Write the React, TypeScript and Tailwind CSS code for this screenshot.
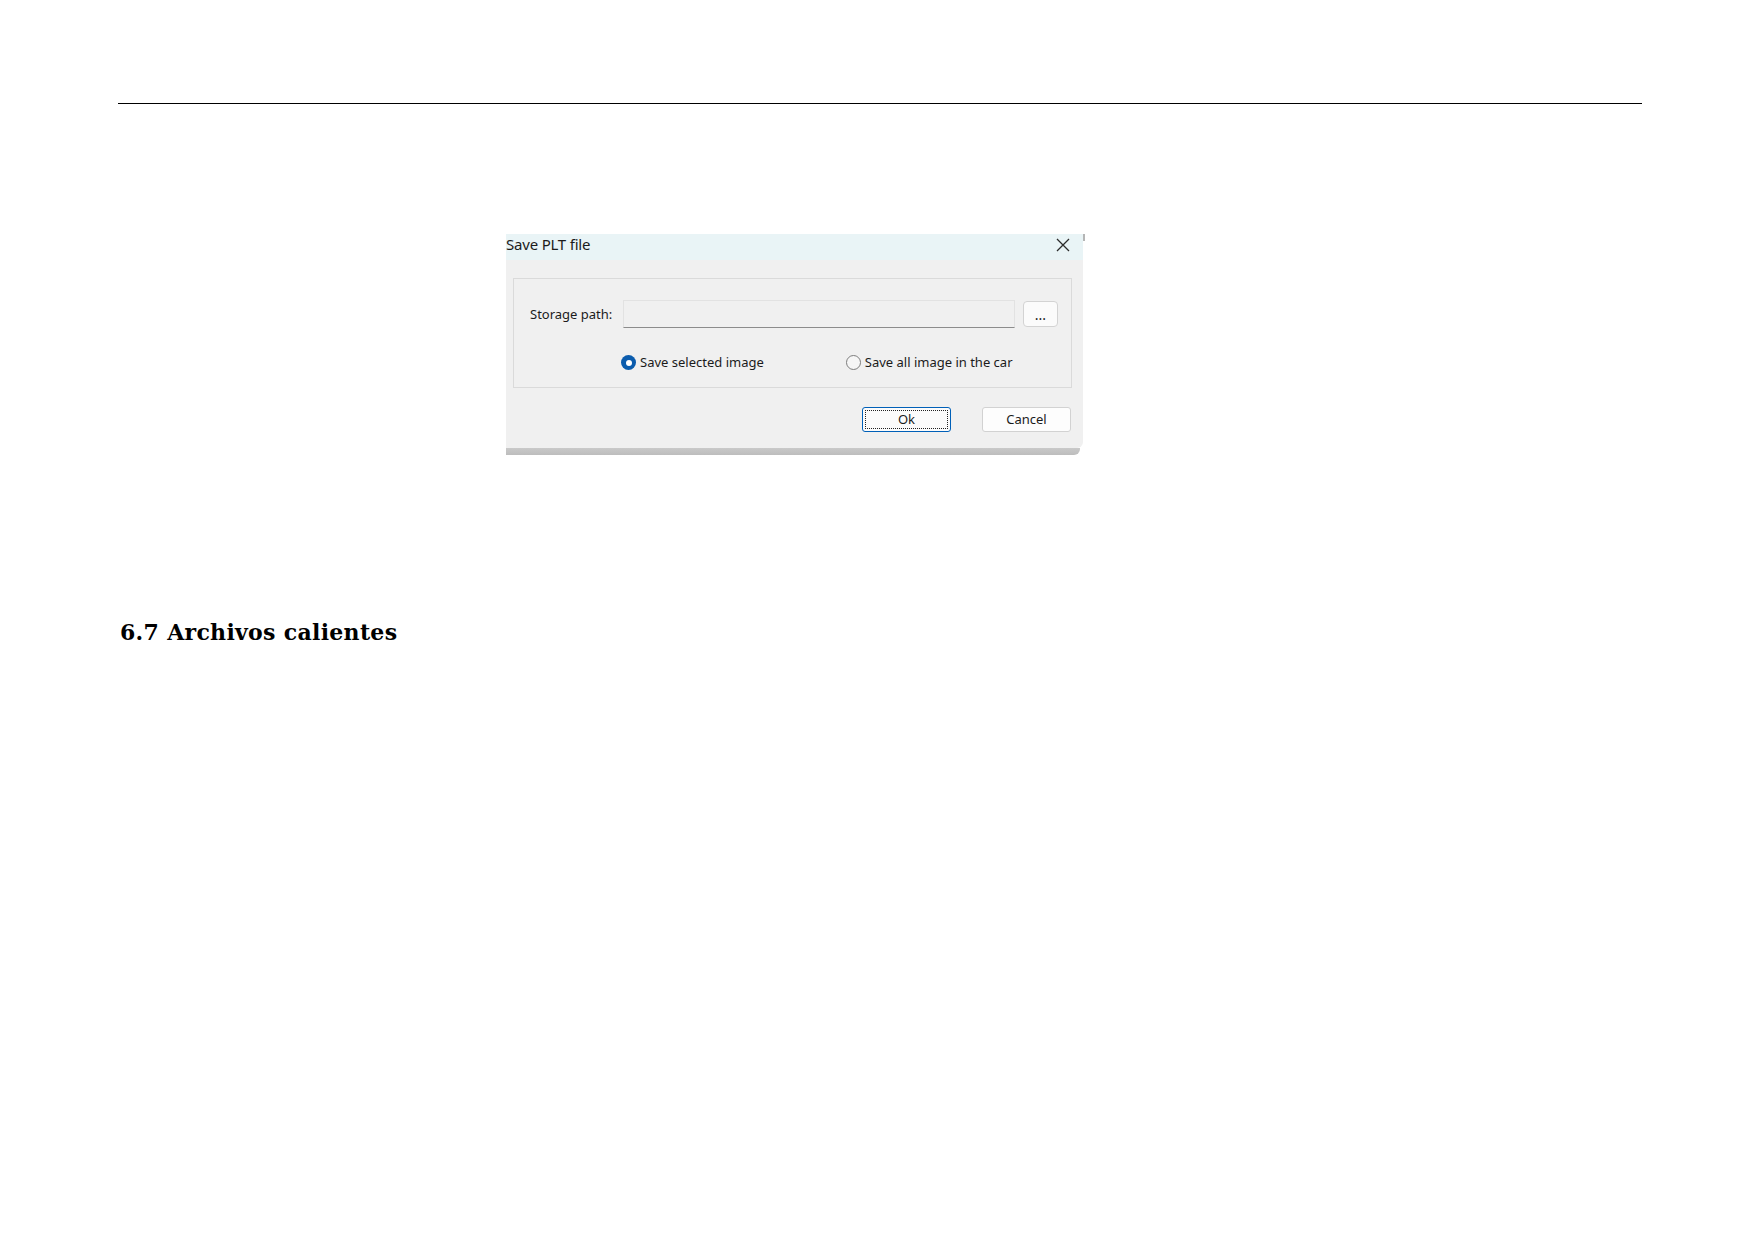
import React from 'react';

const ui = "font-['Noto_Sans','Liberation_Sans',sans-serif] text-[#1b1b1b]";

function CloseIcon() {
  return (
    <svg width="14" height="14" viewBox="0 0 14 14" className="block">
      <path d="M1 1 L13 13 M13 1 L1 13" stroke="#2b2b2b" strokeWidth="1.3" fill="none" />
    </svg>
  );
}

function Radio({ checked, label }: { checked?: boolean; label: string }) {
  return (
    <label className="flex items-center gap-[4px]">
      {checked ? (
        <span className="flex h-[15px] w-[15px] items-center justify-center rounded-full bg-[#0b5cad]">
          <span className="h-[6px] w-[6px] rounded-full bg-white" />
        </span>
      ) : (
        <span className="h-[15px] w-[15px] rounded-full border border-[#7d7d7d] bg-[#f6f6f6]" />
      )}
      <span className="text-[13px] leading-none">{label}</span>
    </label>
  );
}

function SavePltDialog() {
  return (
    <div className={`ml-[506px] mt-[130px] w-[579px] ${ui}`}>
      <div className="flex w-[579px]">
        <div className="flex h-[26px] w-[577px] items-start justify-between bg-[#e9f4f6] pr-[13px] pt-[3px]">
          <span className="text-[15px] leading-none tracking-[-0.2px]">Save PLT file</span>
          <span className="pt-[1px]">
            <CloseIcon />
          </span>
        </div>
        <div className="h-[7px] w-[2px] bg-[#b5b5b5]" />
      </div>
      <div className="w-[577px] rounded-br-[6px] bg-[#f0f0f0] pb-[16px] pl-[7px] pr-[11px] pt-[18px]">
        <div className="border border-[#dadada] pb-[17px] pl-[16px] pr-[13px] pt-[21px]">
          <div className="flex items-center">
            <span className="w-[93px] text-[13px] leading-none">Storage path:</span>
            <div className="h-[28px] w-[392px] border border-[#e2e2e2] border-b-[#8c8c8c] bg-[#f0f0f0]" />
            <button className="ml-[8px] flex h-[26px] w-[35px] items-center justify-center rounded-[4px] border border-[#d3d3d3] bg-[#fbfbfb] pt-[2px] text-[14px] leading-none">
              ...
            </button>
          </div>
          <div className="mt-[27px] flex pl-[91px]">
            <Radio checked label="Save selected image" />
            <div className="ml-[82px]">
              <Radio label="Save all image in the car" />
            </div>
          </div>
        </div>
        <div className="mt-[19px] flex justify-end gap-[31px] pr-[1px]">
          <button className="flex h-[25px] w-[89px] items-center justify-center rounded-[3px] border border-[#0060b8] bg-[#fbfbfb] p-[2px]">
            <span className="flex h-full w-full items-center justify-center border border-dotted border-[#222] text-[13px] leading-none">
              Ok
            </span>
          </button>
          <button className="flex h-[25px] w-[89px] items-center justify-center rounded-[3px] border border-[#d2d2d2] bg-[#fdfdfd] text-[13px] leading-none">
            Cancel
          </button>
        </div>
      </div>
      <div className="h-[7px] w-[574px] rounded-br-[6px] bg-gradient-to-b from-[#c9c9c9] to-[#bdbdbd]" />
    </div>
  );
}

export default function App() {
  return (
    <div className="h-[1240px] w-full overflow-hidden bg-white">
      <div className="pt-[103px]">
        <div className="ml-[118px] h-px w-[1524px] bg-black" />
      </div>
      <SavePltDialog />
      <h2 className="ml-[120px] mt-[166px] font-['DejaVu_Serif',serif] text-[22px] font-bold leading-none tracking-[0.3px] text-black">
        6.7 Archivos calientes
      </h2>
    </div>
  );
}
